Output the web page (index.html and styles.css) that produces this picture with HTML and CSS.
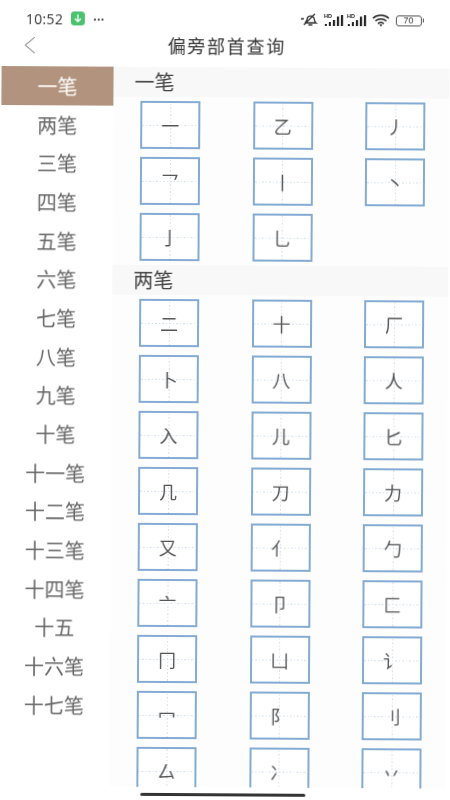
FILE: index.html
```html
<!DOCTYPE html>
<html lang="zh">
<head>
<meta charset="utf-8">
<title>偏旁部首查询</title>
<link rel="stylesheet" href="styles.css">
</head>
<body>
<div class="app">
  <div class="status">
    <div class="status-left">
      <span class="time">10:52</span>
      <svg class="dl" viewBox="0 0 14 14"><rect width="14" height="14" rx="3.5" fill="#4cc26e"/><path d="M7 3v7M4 7.2 7 10.2 10 7.2" fill="none" stroke="#fff" stroke-width="1.3"/></svg>
      <span class="dots">···</span>
    </div>
    <div class="status-right">
      <svg class="mute" viewBox="0 0 18 14"><path d="M4 10c2-1 2-3 2.500-5 .5-2 5-3 6.500 0 .5 2 .5 4 2 5zM7.500 12h4M3 12 14 1M0 6h3" fill="none" stroke="#333" stroke-width="1.300"/></svg>
      <svg class="sig" viewBox="0 0 20 14"><text x="0" y="5" class="hd">HD</text><rect x="1" y="11" width="2" height="2" fill="#222"/><rect x="5" y="9" width="2" height="4" fill="#222"/><rect x="9" y="7" width="2.200" height="6" fill="#222"/><rect x="13" y="3.500" width="2.200" height="9.500" fill="#222"/><rect x="17" y="2" width="2.200" height="11" fill="#222"/></svg>
      <svg class="sig" viewBox="0 0 20 14"><text x="0" y="5" class="hd">HD</text><rect x="1" y="11" width="2" height="2" fill="#222"/><rect x="5" y="9" width="2" height="4" fill="#222"/><rect x="9" y="7" width="2.200" height="6" fill="#222"/><rect x="13" y="3.500" width="2.200" height="9.500" fill="#222"/><rect x="17" y="2" width="2.200" height="11" fill="#222"/></svg>
      <svg class="wifi" viewBox="0 0 18 14"><path d="M1 5c4.500-4 11.500-4 16 0M3.500 7.800c3-2.600 8-2.600 11 0M6 10.500c1.800-1.500 4.200-1.500 6 0" fill="none" stroke="#222" stroke-width="1.500"/><path d="M7.600 11.800 9 13.300l1.400-1.500a2 2 0 0 0-2.800 0z" fill="#222"/></svg>
      <span class="battery"><span class="batt-body">70</span><span class="batt-tip"></span></span>
    </div>
  </div>
  <div class="nav">
    <svg class="back" viewBox="0 0 12 18"><path d="M11 1 1.500 9 11 17" fill="none" stroke="#666" stroke-width="1"/></svg>
    <div class="title">偏旁部首查询</div>
  </div>
  <div class="main">
    <div class="side">
      <div class="side-item active">一笔</div>
      <div class="side-item">两笔</div>
      <div class="side-item">三笔</div>
      <div class="side-item">四笔</div>
      <div class="side-item">五笔</div>
      <div class="side-item">六笔</div>
      <div class="side-item">七笔</div>
      <div class="side-item">八笔</div>
      <div class="side-item">九笔</div>
      <div class="side-item">十笔</div>
      <div class="side-item">十一笔</div>
      <div class="side-item">十二笔</div>
      <div class="side-item">十三笔</div>
      <div class="side-item">十四笔</div>
      <div class="side-item">十五</div>
      <div class="side-item">十六笔</div>
      <div class="side-item">十七笔</div>
    </div>
    <div class="content">
      <div class="sec-head">一笔</div>
      <div class="grid">
        <div class="cell">一</div><div class="cell">乙</div><div class="cell">丿</div>
        <div class="cell">乛</div><div class="cell">丨</div><div class="cell">丶</div>
        <div class="cell">亅</div><div class="cell">乚</div>
      </div>
      <div class="sec-head">两笔</div>
      <div class="grid">
        <div class="cell">二</div><div class="cell">十</div><div class="cell">厂</div>
        <div class="cell">卜</div><div class="cell">八</div><div class="cell">人</div>
        <div class="cell">入</div><div class="cell">儿</div><div class="cell">匕</div>
        <div class="cell">几</div><div class="cell">刀</div><div class="cell">力</div>
        <div class="cell">又</div><div class="cell">亻</div><div class="cell">勹</div>
        <div class="cell">亠</div><div class="cell">卩</div><div class="cell">匚</div>
        <div class="cell">冂</div><div class="cell">凵</div><div class="cell">讠</div>
        <div class="cell">冖</div><div class="cell">阝</div><div class="cell">刂</div>
        <div class="cell">厶</div><div class="cell">冫</div><div class="cell">丷</div>
      </div>
    </div>
  </div>
  <div class="home-bar"><span class="home-line"></span></div>
</div>
</body>
</html>
```
FILE: styles.css
```css
html, body { margin: 0; padding: 0; height: 100%; background: #fff; overflow: hidden; }
body { font-family: "Liberation Sans", "Noto Sans CJK SC", sans-serif; }
.app {
  width: 450px; height: 800px; display: flex; flex-direction: column; background: #fff;
  transform-origin: 0 0; transform: rotate(0.34deg); filter: blur(0.35px); overflow: hidden;
}
.status { height: 36px; flex: none; display: flex; justify-content: space-between; align-items: center; padding: 0 26px; box-sizing: border-box; }
.status-left { display: flex; align-items: center; gap: 8px; }
.time { font: 14px "Open Sans", sans-serif; color: #333; letter-spacing: .3px; }
.dl { width: 14px; height: 14px; }
.dots { font: bold 13px "Liberation Sans", sans-serif; color: #444; letter-spacing: -.5px; }
.status-right { display: flex; align-items: center; gap: 1px; }
.mute { width: 18px; height: 14px; margin-right: 3px; }
.sig { width: 22px; height: 14px; }
.hd { font: bold 5.500px "Liberation Sans", sans-serif; fill: #222; }
.wifi { width: 18px; height: 14px; margin: 0 5px 0 3px; }
.battery { display: flex; align-items: center; }
.batt-body { width: 24px; height: 9px; border: 1px solid #555; border-radius: 3px; font: 9px/9px "Liberation Sans", sans-serif; text-align: center; color: #333; }
.batt-tip { width: 1.500px; height: 4px; background: #555; margin-left: 1px; }
.nav { height: 30px; flex: none; position: relative; display: flex; align-items: flex-start; justify-content: center; }
.back { position: absolute; left: 24px; top: 0; width: 12px; height: 18px; }
.title { font: 18px/20px "Noto Sans CJK SC", sans-serif; letter-spacing: 1.700px; color: #333; margin: -2px 0 0 4px; }
.main { flex: 1; min-height: 0; display: flex; overflow: hidden; }
.side { width: 112px; margin-left: 2px; flex: none; }
.side-item { height: 38.700px; display: flex; align-items: center; justify-content: center; font: 20px "Noto Sans CJK SC", sans-serif; color: #666; }
.side-item.active { background: #b2947e; color: #fff; }
.content { flex: 1; min-width: 0; overflow: hidden; background: #fdfdfd; }
.sec-head { height: 30px; background: #f8f8f8; padding-left: 21px; font: 20px/30px "Noto Sans CJK SC", sans-serif; color: #444; }
.grid { display: grid; grid-template-columns: repeat(3, 60px); column-gap: 52.500px; row-gap: 8px; padding: 4px 0 4px 27px; }
.cell {
  width: 60px; height: 48px; box-sizing: border-box; border: 2px solid #84abd3; background-color: #fff;
  background-image:
    repeating-linear-gradient(90deg, #d5e0ea 0 1.500px, transparent 1.500px 3.500px),
    repeating-linear-gradient(0deg, #d5e0ea 0 1.500px, transparent 1.500px 3.500px);
  background-size: 100% 1px, 1px 100%;
  background-position: center, center;
  background-repeat: no-repeat;
  display: flex; align-items: center; justify-content: center;
  font: 18px/1 "Noto Sans CJK SC", sans-serif; color: #555;
}
.home-bar { height: 14px; flex: none; display: flex; justify-content: center; align-items: center; }
.home-line { width: 165px; height: 3px; border-radius: 2px; background: #333; margin-left: 5px; }
```
